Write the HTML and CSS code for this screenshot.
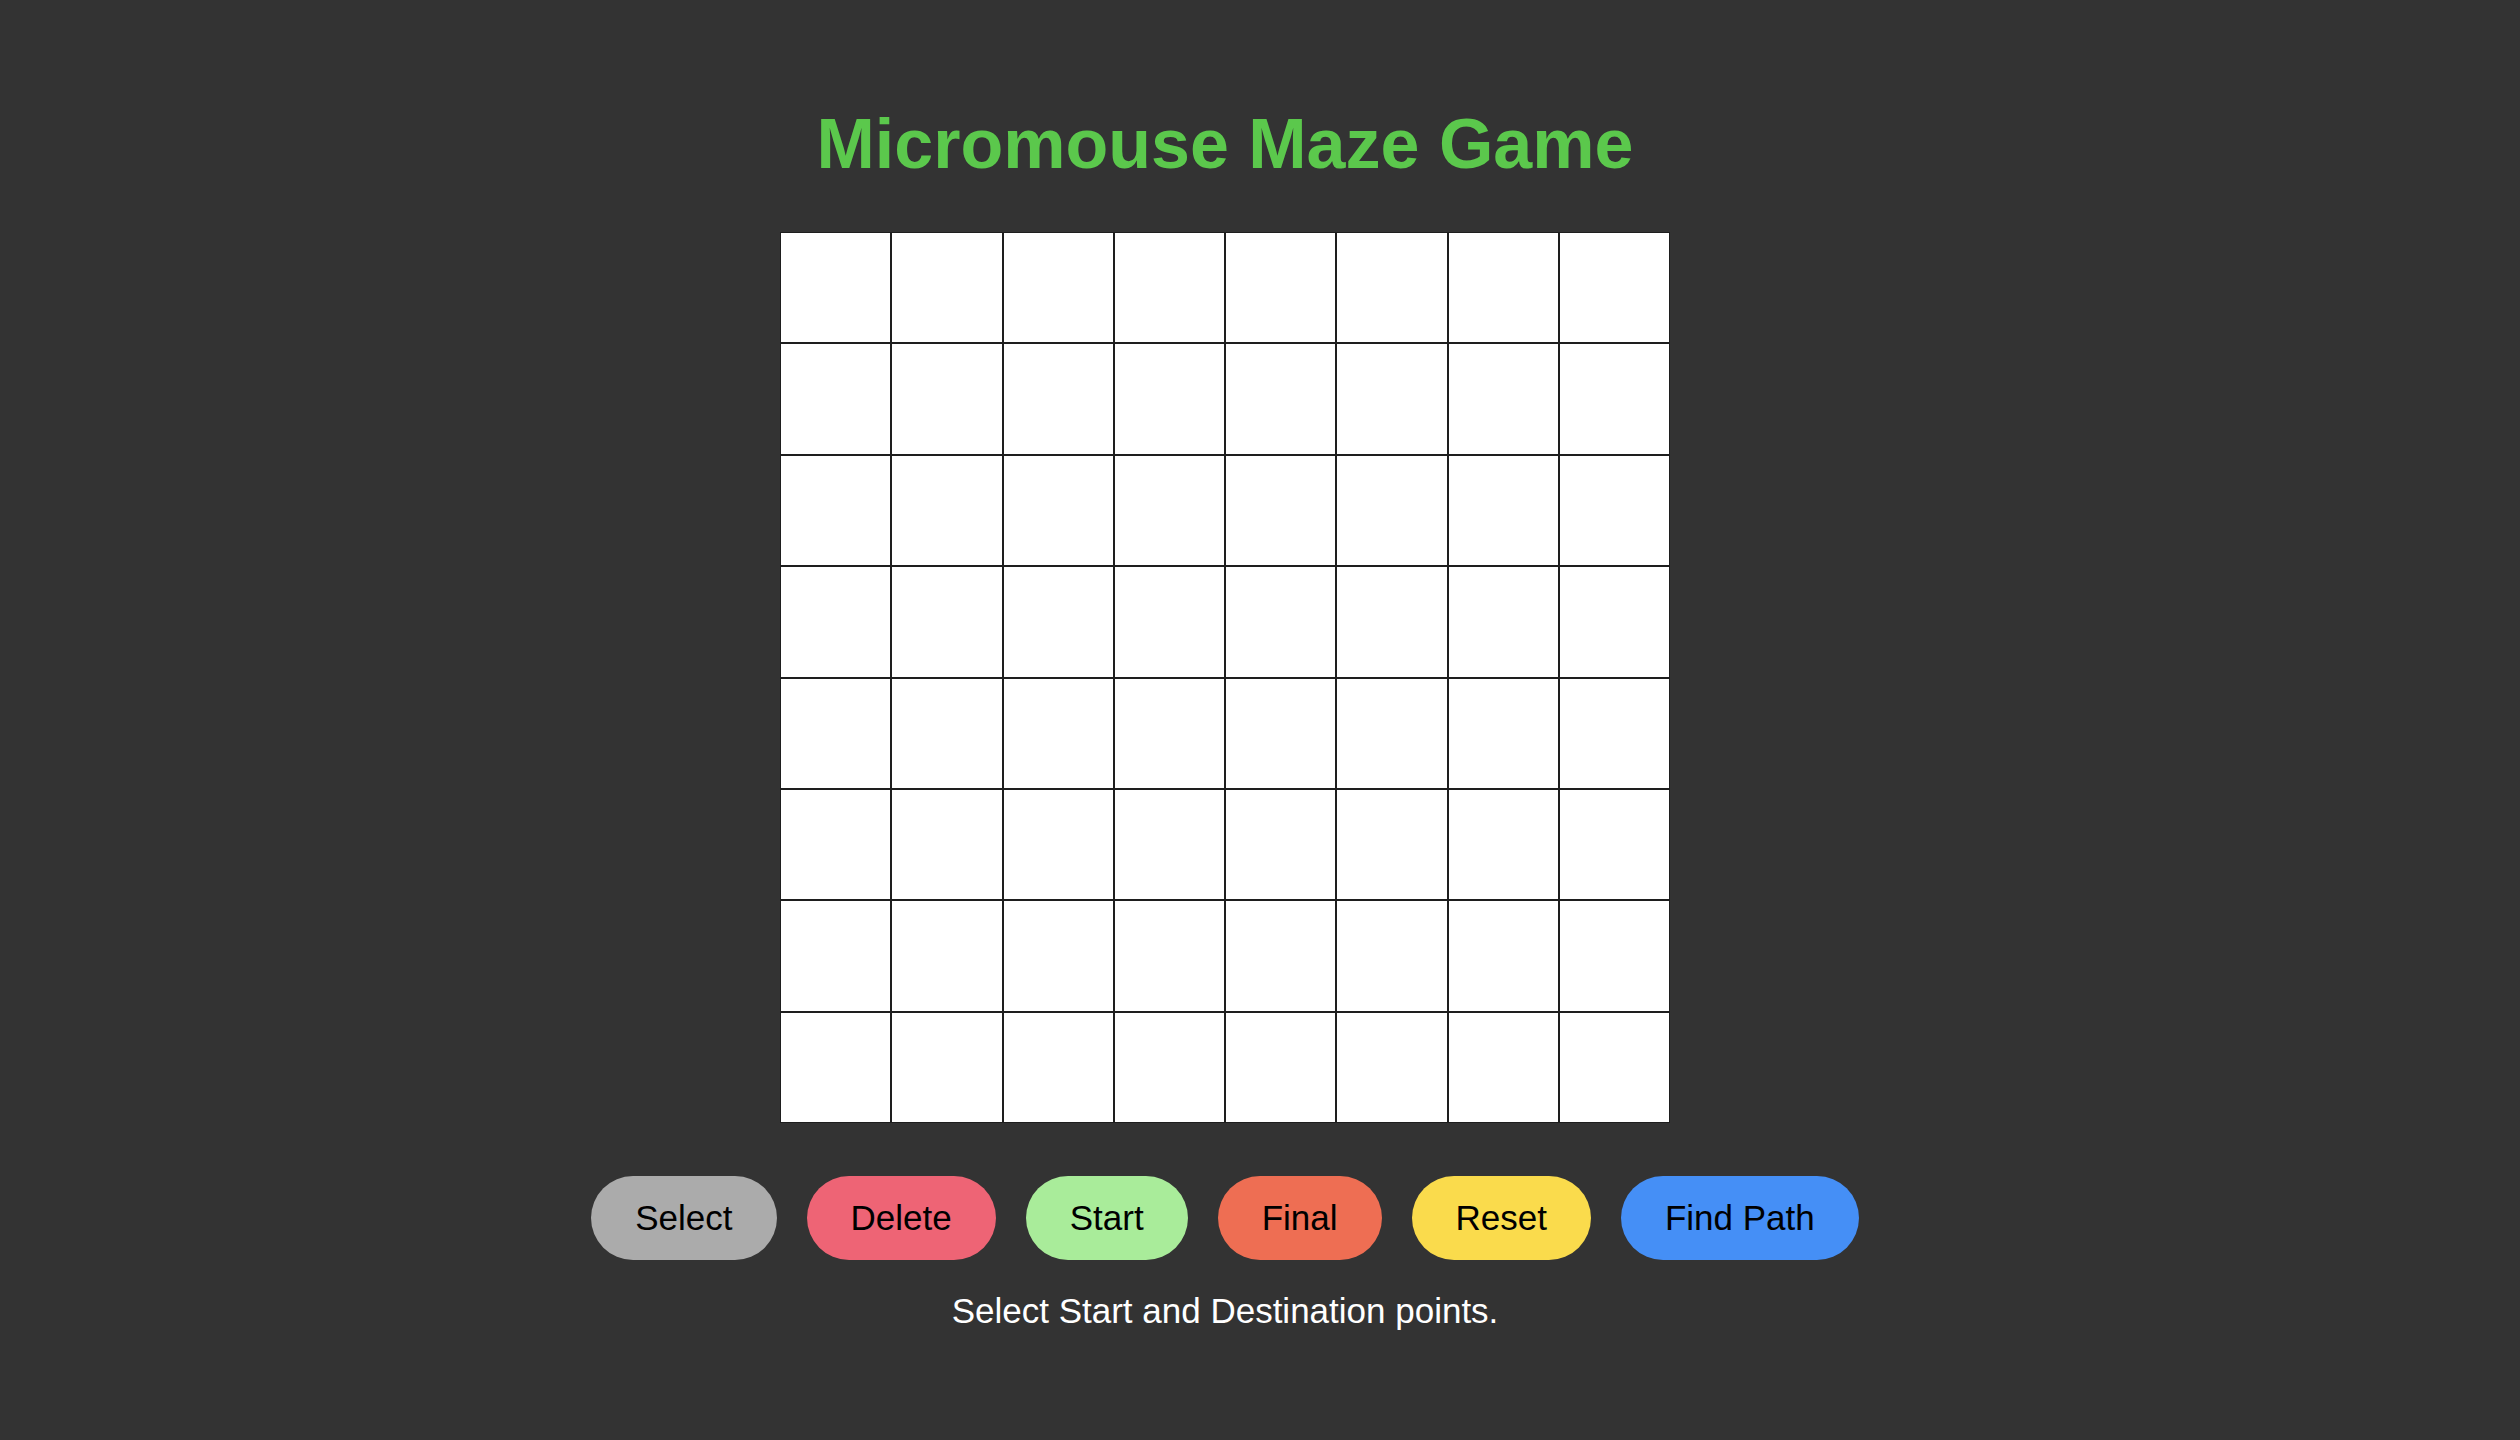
FILE: index.html
```html
<!DOCTYPE html>
<html lang="en">
<head>
<meta charset="utf-8">
<title>Micromouse Maze Game</title>
<link rel="stylesheet" href="styles.css">
</head>
<body>
<main class="app">
  <h1 class="title">Micromouse Maze Game</h1>
  <div class="maze">
    <div class="cell"></div><div class="cell"></div><div class="cell"></div><div class="cell"></div><div class="cell"></div><div class="cell"></div><div class="cell"></div><div class="cell"></div>
    <div class="cell"></div><div class="cell"></div><div class="cell"></div><div class="cell"></div><div class="cell"></div><div class="cell"></div><div class="cell"></div><div class="cell"></div>
    <div class="cell"></div><div class="cell"></div><div class="cell"></div><div class="cell"></div><div class="cell"></div><div class="cell"></div><div class="cell"></div><div class="cell"></div>
    <div class="cell"></div><div class="cell"></div><div class="cell"></div><div class="cell"></div><div class="cell"></div><div class="cell"></div><div class="cell"></div><div class="cell"></div>
    <div class="cell"></div><div class="cell"></div><div class="cell"></div><div class="cell"></div><div class="cell"></div><div class="cell"></div><div class="cell"></div><div class="cell"></div>
    <div class="cell"></div><div class="cell"></div><div class="cell"></div><div class="cell"></div><div class="cell"></div><div class="cell"></div><div class="cell"></div><div class="cell"></div>
    <div class="cell"></div><div class="cell"></div><div class="cell"></div><div class="cell"></div><div class="cell"></div><div class="cell"></div><div class="cell"></div><div class="cell"></div>
    <div class="cell"></div><div class="cell"></div><div class="cell"></div><div class="cell"></div><div class="cell"></div><div class="cell"></div><div class="cell"></div><div class="cell"></div>
  </div>
  <div class="controls">
    <button class="btn btn-select">Select</button>
    <button class="btn btn-delete">Delete</button>
    <button class="btn btn-start">Start</button>
    <button class="btn btn-final">Final</button>
    <button class="btn btn-reset">Reset</button>
    <button class="btn btn-find">Find Path</button>
  </div>
  <p class="status">Select Start and Destination points.</p>
</main>
</body>
</html>
```
FILE: styles.css
```css
html, body {
  margin: 0;
  padding: 0;
  background: #333333;
  height: 100%;
}

body {
  font-family: "Liberation Sans", Arial, Helvetica, sans-serif;
  color: #ffffff;
}

.app {
  display: flex;
  flex-direction: column;
  align-items: center;
  padding-top: 104px;
  padding-right: 70px;
  box-sizing: border-box;
  min-height: 100%;
}

.title {
  margin: 0 0 48px 0;
  font-size: 70px;
  line-height: 80px;
  font-weight: 700;
  color: #5bc84c;
}

.maze {
  display: grid;
  grid-template-columns: repeat(8, 1fr);
  grid-template-rows: repeat(8, 1fr);
  width: 890px;
  height: 891px;
}

.cell {
  background: #ffffff;
  border: 1px solid #1e1e1e;
}

.controls {
  display: flex;
  gap: 30px;
  margin-top: 53px;
}

.btn {
  height: 84px;
  padding: 0 44px;
  border: none;
  border-radius: 42px;
  font-family: "Liberation Sans", Arial, Helvetica, sans-serif;
  font-size: 35px;
  line-height: 40px;
  color: #000000;
  cursor: pointer;
}

.btn-select { background: #ababab; }
.btn-delete { background: #ee6475; }
.btn-start  { background: #a9ec9a; }
.btn-final  { background: #ee6e53; }
.btn-reset  { background: #fadb4c; }
.btn-find   { background: #458ff6; }

.status {
  margin: 31px 0 0 0;
  font-size: 35px;
  line-height: 40px;
  color: #ffffff;
}
```
